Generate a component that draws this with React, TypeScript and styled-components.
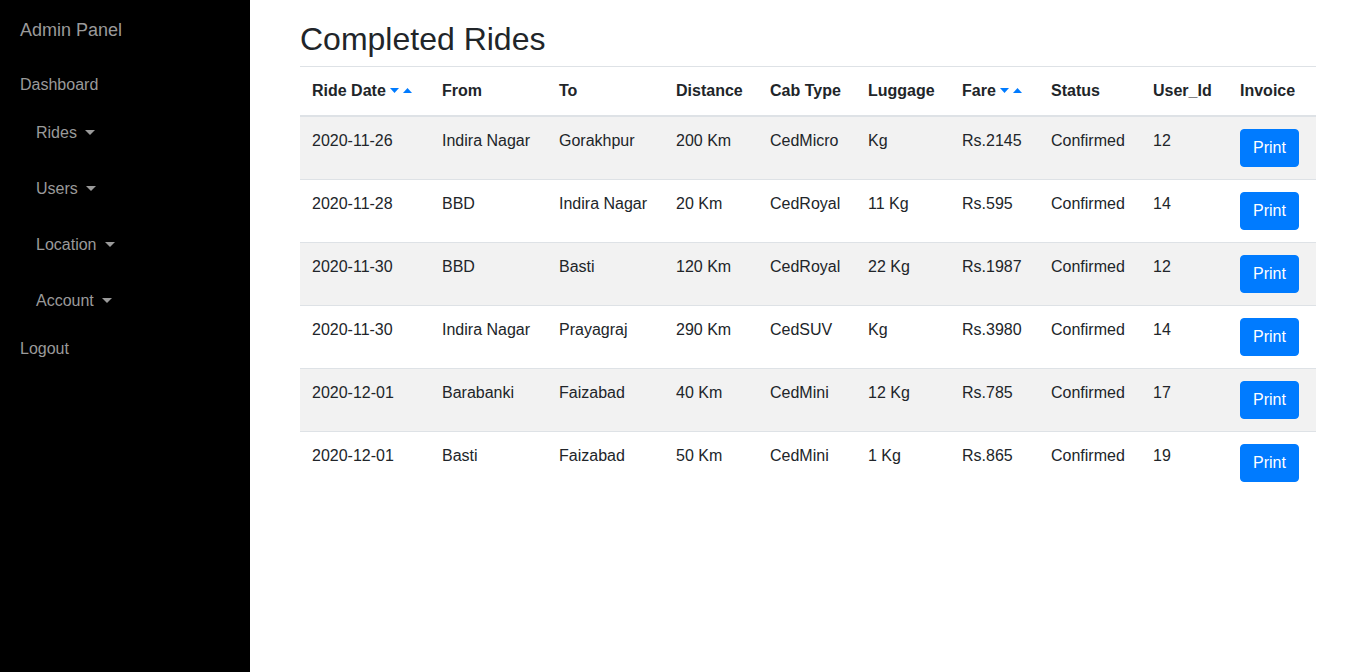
import React from 'react'
import styled, { createGlobalStyle } from 'styled-components'

const GlobalStyle = createGlobalStyle`
  * { box-sizing: border-box; }
  body {
    margin: 0;
    font-family: "Liberation Sans", Arial, sans-serif;
    font-size: 16px;
    line-height: 1.5;
    color: #212529;
    background: #fff;
  }
`

type Ride = {
  date: string
  from: string
  to: string
  distance: string
  cab: string
  luggage: string
  fare: string
  status: string
  userId: string
}

const rides: Ride[] = [
  { date: '2020-11-26', from: 'Indira Nagar', to: 'Gorakhpur', distance: '200 Km', cab: 'CedMicro', luggage: 'Kg', fare: 'Rs.2145', status: 'Confirmed', userId: '12' },
  { date: '2020-11-28', from: 'BBD', to: 'Indira Nagar', distance: '20 Km', cab: 'CedRoyal', luggage: '11 Kg', fare: 'Rs.595', status: 'Confirmed', userId: '14' },
  { date: '2020-11-30', from: 'BBD', to: 'Basti', distance: '120 Km', cab: 'CedRoyal', luggage: '22 Kg', fare: 'Rs.1987', status: 'Confirmed', userId: '12' },
  { date: '2020-11-30', from: 'Indira Nagar', to: 'Prayagraj', distance: '290 Km', cab: 'CedSUV', luggage: 'Kg', fare: 'Rs.3980', status: 'Confirmed', userId: '14' },
  { date: '2020-12-01', from: 'Barabanki', to: 'Faizabad', distance: '40 Km', cab: 'CedMini', luggage: '12 Kg', fare: 'Rs.785', status: 'Confirmed', userId: '17' },
  { date: '2020-12-01', from: 'Basti', to: 'Faizabad', distance: '50 Km', cab: 'CedMini', luggage: '1 Kg', fare: 'Rs.865', status: 'Confirmed', userId: '19' }
]

const columns: { label: string; width: number; sortable?: boolean }[] = [
  { label: 'Ride Date', width: 130, sortable: true },
  { label: 'From', width: 117 },
  { label: 'To', width: 117 },
  { label: 'Distance', width: 94 },
  { label: 'Cab Type', width: 98 },
  { label: 'Luggage', width: 94 },
  { label: 'Fare', width: 89, sortable: true },
  { label: 'Status', width: 102 },
  { label: 'User_Id', width: 87 },
  { label: 'Invoice', width: 88 }
]

const menu = ['Rides', 'Users', 'Location', 'Account']

const SortArrows = () => (
  <Arrows>
    <svg width="22" height="6" viewBox="0 0 22 6">
      <polygon points="0,0 9,0 4.5,5" fill="#007bff" />
      <polygon points="13,5 22,5 17.5,0" fill="#007bff" />
    </svg>
  </Arrows>
)

export default function App() {
  return (
    <>
      <GlobalStyle />
      <Page>
        <Sidebar>
          <Brand>Admin Panel</Brand>
          <NavLink>Dashboard</NavLink>
          <SubMenu>
            {menu.map((m) => (
              <DropdownToggle key={m}>{m}</DropdownToggle>
            ))}
          </SubMenu>
          <NavLink>Logout</NavLink>
        </Sidebar>
        <Main>
          <Title>Completed Rides</Title>
          <Table>
            <colgroup>
              {columns.map((c) => (
                <col key={c.label} style={{ width: c.width }} />
              ))}
            </colgroup>
            <thead>
              <tr>
                {columns.map((c) => (
                  <Th key={c.label}>
                    {c.label}
                    {c.sortable && <SortArrows />}
                  </Th>
                ))}
              </tr>
            </thead>
            <tbody>
              {rides.map((r, i) => (
                <Row key={i} $striped={i % 2 === 0}>
                  <Td>{r.date}</Td>
                  <Td>{r.from}</Td>
                  <Td>{r.to}</Td>
                  <Td>{r.distance}</Td>
                  <Td>{r.cab}</Td>
                  <Td>{r.luggage}</Td>
                  <Td>{r.fare}</Td>
                  <Td>{r.status}</Td>
                  <Td>{r.userId}</Td>
                  <Td>
                    <PrintButton>Print</PrintButton>
                  </Td>
                </Row>
              ))}
            </tbody>
          </Table>
        </Main>
      </Page>
    </>
  )
}

const Page = styled.div`
  display: flex;
  min-height: 672px;
`

const Sidebar = styled.nav`
  width: 250px;
  flex-shrink: 0;
  background: #000;
  color: #9a9a9a;
  padding: 17px 20px 0;
  display: flex;
  flex-direction: column;
`

const Brand = styled.div`
  font-size: 18px;
  line-height: 27px;
  height: 27px;
  margin-bottom: 29px;
`

const NavLink = styled.div`
  font-size: 16px;
  line-height: 24px;
`

const SubMenu = styled.div`
  display: flex;
  flex-direction: column;
  padding: 24px 0 0 16px;
  gap: 32px;
  margin-bottom: 24px;
`

const DropdownToggle = styled.div`
  font-size: 16px;
  line-height: 24px;
  display: flex;
  align-items: center;

  &::after {
    content: '';
    display: inline-block;
    margin-left: 0.5em;
    margin-top: -2px;
    border-top: 5px solid #9a9a9a;
    border-left: 5px solid transparent;
    border-right: 5px solid transparent;
  }
`

const Main = styled.main`
  flex: 1;
  padding: 20px 50px 0;
`

const Title = styled.h2`
  margin: 0 0 8px;
  font-size: 32px;
  font-weight: 500;
  line-height: 1.2;
  color: #212529;
`

const Table = styled.table`
  width: 1016px;
  border-collapse: collapse;
  table-layout: fixed;
  border-top: 1px solid #dee2e6;
`

const Th = styled.th`
  text-align: left;
  font-weight: 700;
  padding: 12px;
  vertical-align: bottom;
  border-bottom: 2px solid #dee2e6;
  white-space: nowrap;
`

const Arrows = styled.span`
  display: inline-block;
  margin-left: 4px;
  vertical-align: 2px;
  line-height: 0;
`

const Row = styled.tr<{ $striped: boolean }>`
  background: ${({ $striped }) => ($striped ? '#f2f2f2' : '#fff')};
  border-bottom: 1px solid #dee2e6;

  &:last-child {
    border-bottom: none;
  }
`

const Td = styled.td`
  padding: 12px;
  vertical-align: top;
  white-space: nowrap;
`

const PrintButton = styled.button`
  font-family: inherit;
  font-size: 16px;
  line-height: 1.5;
  padding: 6px 12px;
  color: #fff;
  background: #007bff;
  border: 1px solid #007bff;
  border-radius: 4px;
  cursor: pointer;
`
